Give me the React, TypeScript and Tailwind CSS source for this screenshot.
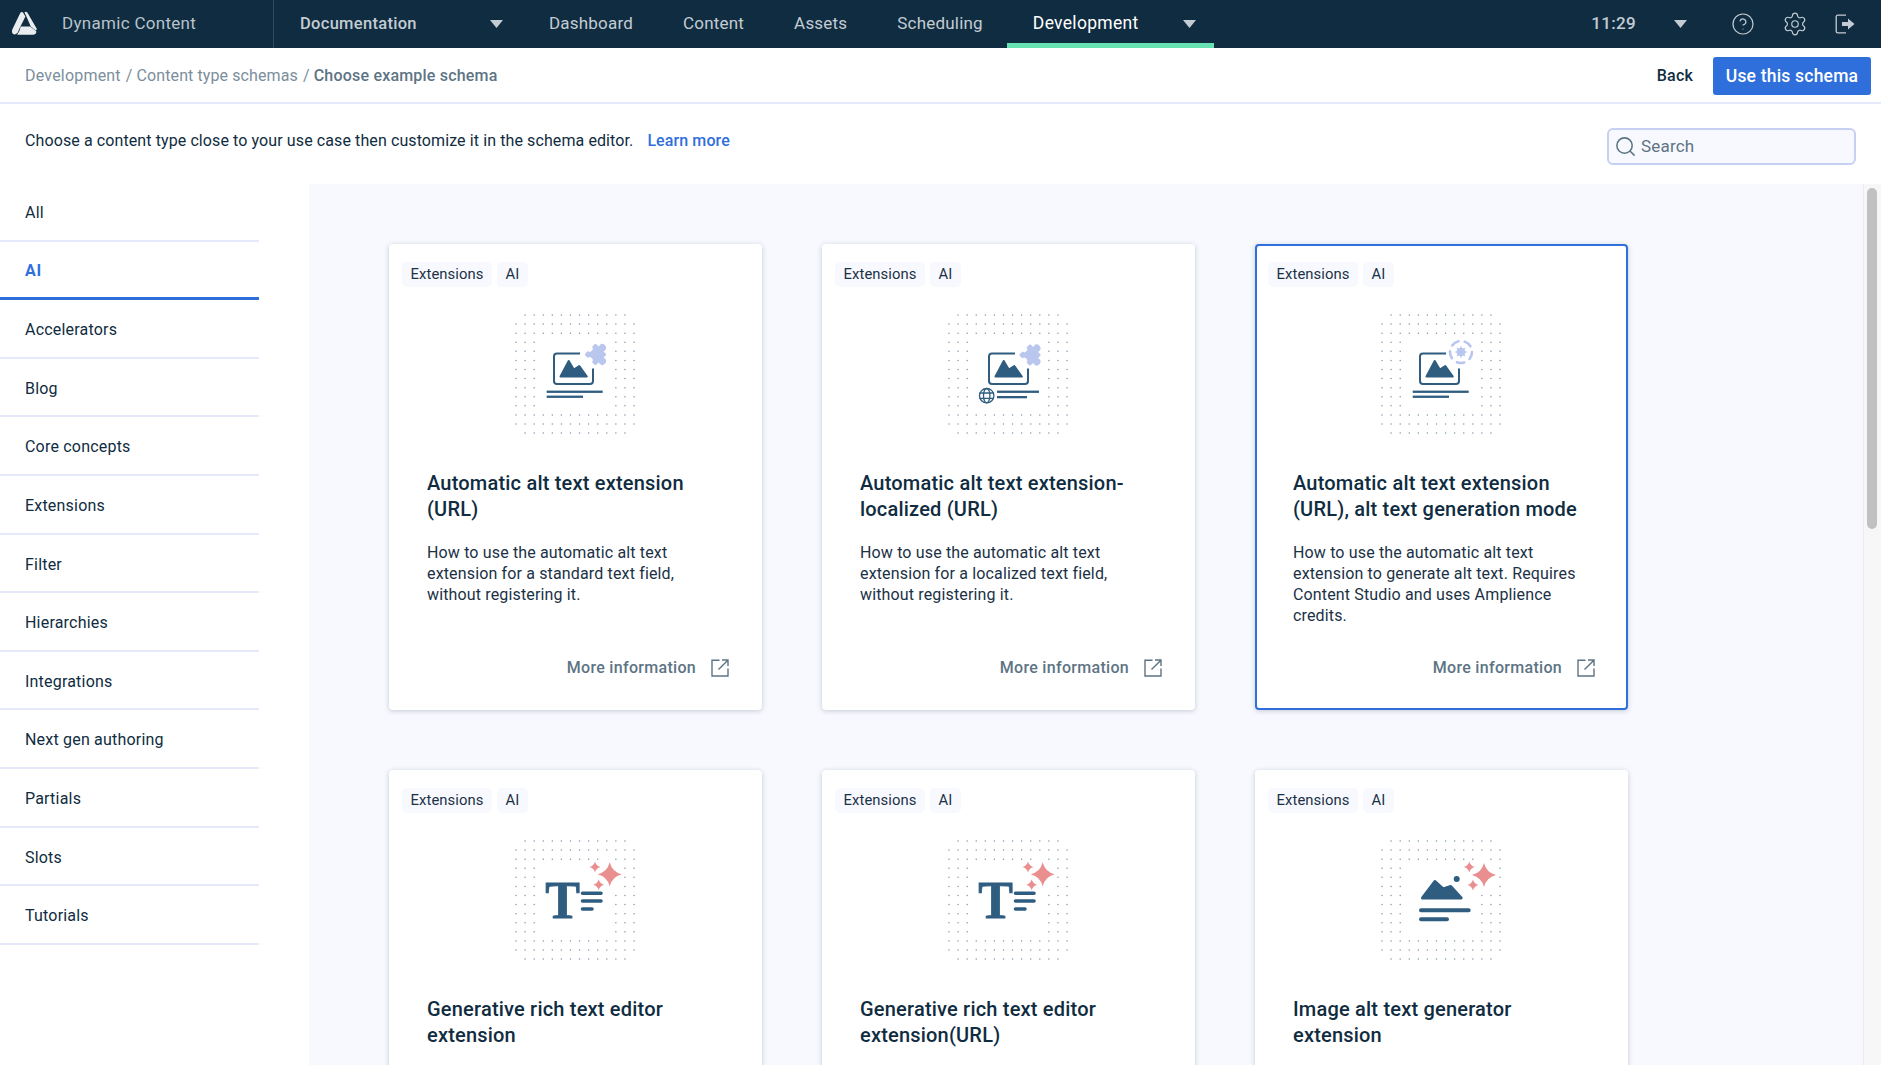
import { CircleHelp, Search, Settings } from "lucide-react";
import type { ReactNode } from "react";

const NAV = ["Dashboard", "Content", "Assets", "Scheduling"];

const CATEGORIES = [
  "All",
  "AI",
  "Accelerators",
  "Blog",
  "Core concepts",
  "Extensions",
  "Filter",
  "Hierarchies",
  "Integrations",
  "Next gen authoring",
  "Partials",
  "Slots",
  "Tutorials",
];

const BLUE = "#2f5d80";
const LILAC = "#b9c6ee";
const CORAL = "#e98f8f";

type Keepout = { x: number; y: number; r: number };

// dot grid behind each schema illustration
function Dots({ keepout = [] }: { keepout?: Keepout[] }) {
  const dots: ReactNode[] = [];
  for (let row = 0; row < 14; row++) {
    for (let col = 0; col < 14; col++) {
      if ((row === 0 || row === 13) && (col === 0 || col === 13)) continue;
      if (row >= 3 && row <= 10 && col >= 3 && col <= 10) continue;
      const x = 6 + col * 9.08;
      const y = 6 + row * 9.08;
      if (keepout.some((k) => Math.hypot(k.x - x, k.y - y) < k.r)) continue;
      dots.push(<circle key={`${row}-${col}`} cx={x} cy={y} r={0.75} fill="#7d97ad" />);
    }
  }
  return <>{dots}</>;
}

function Star({ x, y, r, fill = CORAL }: { x: number; y: number; r: number; fill?: string }) {
  const c = r * 0.2;
  return (
    <path
      d={`M${x} ${y - r}Q${x + c} ${y - c} ${x + r} ${y}Q${x + c} ${y + c} ${x} ${y + r}Q${x - c} ${y + c} ${x - r} ${y}Q${x - c} ${y - c} ${x} ${y - r}Z`}
      fill={fill}
    />
  );
}

function Frame({ dx = 0 }: { dx?: number }) {
  return (
    <g transform={`translate(${dx} 0)`}>
      <path
        d="M70 44.5H47a3 3 0 0 0-3 3V72a3 3 0 0 0 3 3H80a3 3 0 0 0 3-3V59.5"
        fill="none"
        stroke={BLUE}
        strokeWidth={2}
      />
      <path
        d="M50.5 67.5L58.7 52L63.8 60.5L69.3 57L76.8 67.5Z"
        fill={BLUE}
        stroke={BLUE}
        strokeWidth={2}
        strokeLinejoin="round"
      />
    </g>
  );
}

function Puzzle({ x, y }: { x: number; y: number }) {
  return (
    <g transform={`translate(${x} ${y}) rotate(45) scale(1.12)`}>
      <rect x={-7} y={-7} width={14} height={14} rx={1} fill={LILAC} />
      <circle cx={0} cy={-8.5} r={3.3} fill={LILAC} />
      <circle cx={8.5} cy={0} r={3.3} fill={LILAC} />
      <circle cx={-7.2} cy={0} r={2.6} fill="#ffffff" />
      <circle cx={0} cy={7.2} r={2.6} fill="#ffffff" />
    </g>
  );
}

function ImageExtensionIcon() {
  return (
    <svg width={130} height={130} viewBox="0 0 130 130">
      <Dots />
      <Frame />
      <Puzzle x={85.5} y={45.5} />
      <rect x={36.7} y={81.6} width={56} height={2.3} fill={BLUE} />
      <rect x={36.7} y={86.6} width={36.3} height={2.3} fill={BLUE} />
    </svg>
  );
}

function LocalizedIcon() {
  return (
    <svg width={130} height={130} viewBox="0 0 130 130">
      <Dots />
      <Frame dx={2} />
      <Puzzle x={87} y={46} />
      <rect x={54} y={81.6} width={42} height={2.3} fill={BLUE} />
      <rect x={54} y={87} width={30} height={2.3} fill={BLUE} />
      <g fill="none" stroke={BLUE} strokeWidth={1.3}>
        <circle cx={43.7} cy={86.7} r={7.2} />
        <ellipse cx={43.7} cy={86.7} rx={3.2} ry={7.2} />
        <path d="M36.5 84H50.9M36.5 89.4H50.9" />
      </g>
    </svg>
  );
}

function GenerationModeIcon() {
  const cx = 85;
  const cy = 43;
  return (
    <svg width={130} height={130} viewBox="0 0 130 130">
      <Dots />
      <Frame />
      <circle
        cx={cx}
        cy={cy}
        r={11}
        fill="none"
        stroke={LILAC}
        strokeWidth={2.6}
        strokeDasharray="7.5 6.32"
        strokeLinecap="round"
      />
      <circle cx={cx} cy={cy} r={4} fill={LILAC} />
      <Star x={cx} y={cy} r={6.5} fill={LILAC} />
      <g transform={`rotate(45 ${cx} ${cy})`}>
        <Star x={cx} y={cy} r={6.5} fill={LILAC} />
      </g>
      <rect x={36.7} y={81.6} width={56} height={2.3} fill={BLUE} />
      <rect x={36.7} y={86.6} width={36.3} height={2.3} fill={BLUE} />
    </svg>
  );
}

function RichTextIcon() {
  return (
    <svg width={130} height={130} viewBox="0 0 130 130">
      <Dots keepout={[{ x: 98, y: 40, r: 17 }, { x: 88, y: 50, r: 10 }]} />
      <text
        x={52.5}
        y={82.5}
        textAnchor="middle"
        fontFamily='"Liberation Serif", serif'
        fontWeight={700}
        fontSize={52}
        fill={BLUE}
        stroke={BLUE}
        strokeWidth={0.8}
      >
        T
      </text>
      <g stroke={BLUE} strokeWidth={3.6} strokeLinecap="round">
        <path d="M72.5 58.3H91M72.5 66H91M72.5 74H82" />
      </g>
      <Star x={99.7} y={39.3} r={12} />
      <Star x={85} y={32} r={5.5} />
      <Star x={88.7} y={49.7} r={5.5} />
    </svg>
  );
}

function AltTextGeneratorIcon() {
  return (
    <svg width={130} height={130} viewBox="0 0 130 130">
      <Dots keepout={[{ x: 105, y: 40, r: 17 }, { x: 95, y: 50, r: 10 }]} />
      <path
        d="M46.5 63L59 46.5L67.3 54L74.7 51.5L85.2 63Z"
        fill={BLUE}
        stroke={BLUE}
        strokeWidth={3}
        strokeLinejoin="round"
      />
      <circle cx={80.7} cy={44} r={3} fill={BLUE} />
      <g stroke={BLUE} strokeWidth={4} strokeLinecap="round">
        <path d="M45 75.3H92.7M45 84.3H71" />
      </g>
      <Star x={108} y={40} r={12} />
      <Star x={93.3} y={32} r={5.5} />
      <Star x={97} y={50} r={5.5} />
    </svg>
  );
}

const SCHEMAS = [
  {
    title: "Automatic alt text extension (URL)",
    description:
      "How to use the automatic alt text extension for a standard text field, without registering it.",
    icon: <ImageExtensionIcon />,
  },
  {
    title: "Automatic alt text extension-localized (URL)",
    description:
      "How to use the automatic alt text extension for a localized text field, without registering it.",
    icon: <LocalizedIcon />,
  },
  {
    title: "Automatic alt text extension (URL), alt text generation mode",
    description:
      "How to use the automatic alt text extension to generate alt text. Requires Content Studio and uses Amplience credits.",
    icon: <GenerationModeIcon />,
    selected: true,
  },
  {
    title: "Generative rich text editor extension",
    icon: <RichTextIcon />,
  },
  {
    title: "Generative rich text editor extension(URL)",
    icon: <RichTextIcon />,
  },
  {
    title: "Image alt text generator extension",
    icon: <AltTextGeneratorIcon />,
  },
];

function Caret({ className = "" }: { className?: string }) {
  return (
    <svg width={13} height={8} viewBox="0 0 13 8" className={className}>
      <path d="M0 0H13L6.5 8Z" fill="#c3ccd3" />
    </svg>
  );
}

function Logo() {
  return (
    <svg width={26} height={26} viewBox="0 0 26 26" className="shrink-0">
      <g fill="#e9edf0">
        <path d="M9.5 1.5Q11 .3 12 1.5L14.4 5.6L8 18.5Q6.6 23.3 3.5 23.5Q.2 23 1.2 18.8Z" />
        <path d="M13.5 1.2Q15 0 16.5 1.8L25.6 17.4Q26 19.6 24.6 19.4L19.8 15.4Z" />
        <path d="M9.8 15.6H19.2L25.4 20.4Q25 23.6 21.8 23.8H6.2Q8.6 20.8 9.8 15.6Z" />
      </g>
    </svg>
  );
}

function ExternalIcon() {
  return (
    <svg width={18} height={18} viewBox="0 0 18 18" fill="none" stroke="#5d7484" strokeWidth={1.4}>
      <path d="M8.5 1.2H1V17H17V9.5" />
      <path d="M7.5 10.5L16.6 1.4M11 1H17V7" />
    </svg>
  );
}

function LogoutIcon() {
  return (
    <svg width={20} height={20} viewBox="0 0 20 20" fill="none">
      <path d="M11 1.2H2.8Q1.2 1.2 1.2 2.8V17.2Q1.2 18.8 2.8 18.8H11" stroke="#c3ccd3" strokeWidth={1.3} />
      <path d="M7 8H13V4.5L19.5 10L13 15.5V12H7Z" fill="#c3ccd3" />
    </svg>
  );
}

function SchemaCard({
  title,
  description,
  icon,
  selected,
}: {
  title: string;
  description?: string;
  icon: ReactNode;
  selected?: boolean;
}) {
  return (
    <div
      className={`relative flex h-[466px] w-[373px] shrink-0 flex-col rounded-[4px] bg-white shadow-[0_1px_5px_rgba(60,80,110,0.28)] ${
        selected ? "border-[2px] border-[#2f6fdb] p-[15.5px_11px]" : "p-[17.5px_13px]"
      }`}
    >
      <div className="flex gap-[5px]">
        {["Extensions", "AI"].map((tag) => (
          <span
            key={tag}
            className="flex h-[25px] items-center rounded-[5px] bg-[#f8f9fe] px-[8.5px] text-[14.8px] tracking-[0.1px] text-[#1b3146]"
          >
            {tag}
          </span>
        ))}
      </div>
      <div className="mt-[22.5px] flex justify-center pr-[2px]">{icon}</div>
      <div className="mt-[30.5px] px-[25px] text-[#102c41]">
        <h3 className="text-[20px] leading-[26px] font-medium tracking-[0.2px]">{title}</h3>
        {description && (
          <p className="mt-[20px] text-[16px] leading-[21px] tracking-[0.15px] text-[#1b3146]">{description}</p>
        )}
      </div>
      {description && (
        <div
          className={`absolute flex items-center gap-[15px] text-[16px] font-medium tracking-[0.3px] text-[#5d7484] ${
            selected ? "right-[31px] bottom-[28px]" : "right-[33px] bottom-[30px]"
          }`}
        >
          <span>More information</span>
          <ExternalIcon />
        </div>
      )}
    </div>
  );
}

export default function App() {
  return (
    <div className="flex h-[1065px] w-[1881px] flex-col overflow-hidden bg-white font-['Roboto',sans-serif] text-[#102c41]">
      {/* Top bar */}
      <header className="flex h-[48px] shrink-0 items-center bg-[#102c41] text-[17px] tracking-[0.3px] text-[#c3ccd3]">
        <div className="flex h-full w-[274px] items-center border-r border-[#33495c] pl-[11px]">
          <Logo />
          <span className="ml-[25px] text-[#b8c3cb]">Dynamic Content</span>
        </div>
        <div className="flex w-[232px] items-center justify-between pr-[3px] pl-[26px]">
          <span className="text-[16.5px] font-medium">Documentation</span>
          <Caret />
        </div>
        <nav className="ml-[43px] flex h-full items-center gap-[50px] tracking-[0.2px]">
          {NAV.map((item) => (
            <span key={item}>{item}</span>
          ))}
        </nav>
        <div className="ml-[24px] flex h-full w-[207px] items-center justify-between border-b-[5px] border-[#67e0b2] pt-[4px] pr-[18px] pl-[26px] text-[17.5px] text-white">
          <span>Development</span>
          <Caret />
        </div>
        <span className="ml-auto font-medium">11:29</span>
        <Caret className="ml-[38px]" />
        <div className="mr-[26px] ml-[44px] flex items-center gap-[27px]">
          <CircleHelp size={24} strokeWidth={1.2} />
          <Settings size={26} strokeWidth={1.1} />
          <LogoutIcon />
        </div>
      </header>

      {/* Breadcrumb row */}
      <div className="flex h-[56px] shrink-0 items-center justify-between border-b-2 border-[#e5e9fa] pt-[2px] pr-[10px] pl-[25px] text-[16px] tracking-[0.2px]">
        <div className="flex gap-[5px] text-[#7b8e9c]">
          <span>Development</span>
          <span className="tracking-[0.1px]">/ Content type schemas</span>
          <span>/</span>
          <span className="-ml-[1px] font-medium tracking-[0.2px] text-[#5d7484]">Choose example schema</span>
        </div>
        <div className="flex items-center gap-[20px]">
          <span className="font-medium">Back</span>
          <button className="flex h-[38px] w-[158px] items-center justify-center rounded-[3px] bg-[#2f6fdb] text-[17.5px] font-medium text-white">
            Use this schema
          </button>
        </div>
      </div>

      {/* Intro row */}
      <div className="flex h-[80px] shrink-0 items-start justify-between pr-[25px] pl-[25px] text-[16px]">
        <p className="mt-[25px] tracking-[0.1px]">
          Choose a content type close to your use case then customize it in the schema editor.
          <span className="ml-[14px] font-medium text-[#2f6fdb]">Learn more</span>
        </p>
        <div className="mt-[24px] flex h-[37px] w-[249px] items-center gap-[4px] rounded-[6px] border-2 border-[#c6d0f2] bg-[#f8f9fe] pl-[5px] text-[17px] tracking-[0.2px] text-[#5d7484]">
          <Search size={23} strokeWidth={1.6} />
          <span>Search</span>
        </div>
      </div>

      <div className="flex min-h-0 flex-1">
        {/* Categories */}
        <aside className="mr-[50px] -mt-[1px] w-[259px] shrink-0 text-[16px] tracking-[0.2px]">
          {CATEGORIES.map((cat) => (
            <div
              key={cat}
              className={
                cat === "AI"
                  ? "flex h-[58.6px] items-center border-b-[3px] border-[#2f6fdb] pt-[4px] pl-[25px] font-bold tracking-[0.8px] text-[#2f6fdb]"
                  : "flex h-[58.6px] items-center border-b-2 border-[#e5e9fa] pt-[3.5px] pl-[25px]"
              }
            >
              {cat}
            </div>
          ))}
        </aside>

        {/* Schema cards */}
        <main className="min-w-0 flex-1 overflow-hidden bg-[#f8f9fe] pt-[60px] pl-[80px]">
          <div className="grid w-[1239px] grid-cols-[373px_373px_373px] gap-[60px]">
            {SCHEMAS.map((schema) => (
              <SchemaCard key={schema.title} {...schema} />
            ))}
          </div>
        </main>

        {/* Scrollbar */}
        <div className="w-[18px] shrink-0 border-l border-[#ececec] bg-[#f7f7f7] pt-[4px] pl-[3px]">
          <div className="h-[341px] w-[10px] rounded-full bg-[#c1c1c1]" />
        </div>
      </div>
    </div>
  );
}
